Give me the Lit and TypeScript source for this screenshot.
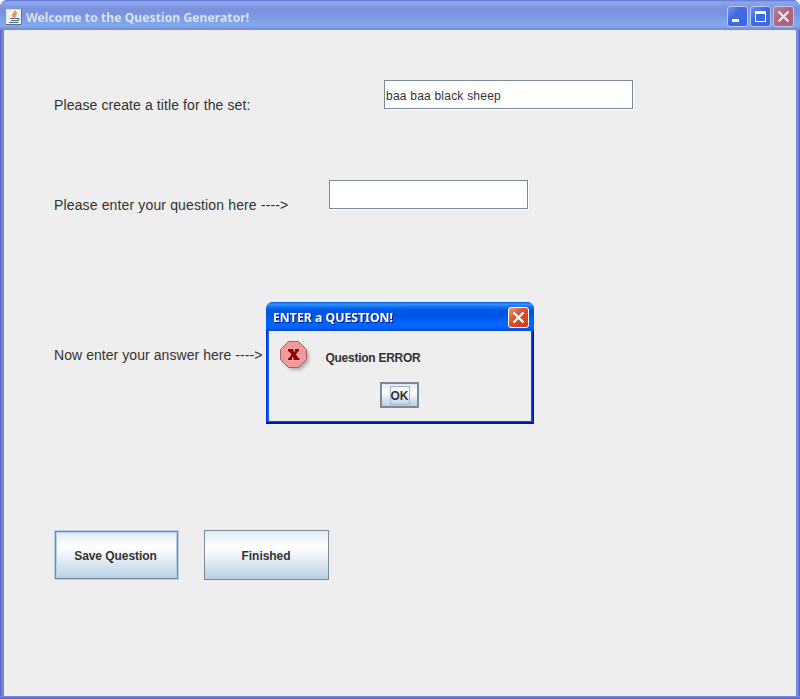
import { LitElement, html, css } from "lit";
import { customElement } from "lit/decorators.js";

@customElement("app-root")
export class AppRoot extends LitElement {
  static styles = css`
    :host {
      display: block;
      position: relative;
      width: 800px;
      height: 699px;
      overflow: hidden;
      font-family: "Liberation Sans", Arial, sans-serif;
      color: #333;
    }
    * { box-sizing: border-box; }
    svg { display: block; flex: none; }
    .window {
      display: flex;
      flex-direction: column;
      height: 699px;
      background: linear-gradient(90deg, #6468cc 0 1px, #6b76da 1px 2px, #7489e0 2px 798px, #6b76da 798px 799px, #6064c4 799px);
      border-radius: 7px 7px 0 0;
      overflow: hidden;
    }
    .bar {
      height: 30px;
      flex: none;
      display: flex;
      align-items: center;
      padding: 3px 6px 0 6px;
      background: linear-gradient(#6273d5 0, #8ba7ec 2px, #88a3e9 4px, #7b93df 8px, #7b94e0 14px, #80a3e9 21px, #82a8ec 26px, #7b96e1 28px, #7189da 30px);
    }
    .title {
      margin-left: 4px;
      flex: 1;
      font: 700 13px "Noto Sans", "Open Sans", sans-serif;
      line-height: 20px;
      color: #d8e4f8;
      white-space: nowrap;
    }
    .title span { display: inline-block; transform-origin: 0 50%; }
    .t1 span { transform: scaleX(.94); }
    .t2 span { transform: scaleX(.98); font-size: 12.5px; }
    .controls { display: flex; gap: 2px; }
    .body {
      flex: 1;
      margin: 0 4px;
      padding: 50px 0 0 50px;
      background: #eee;
      display: flex;
      flex-direction: column;
    }
    .edge { height: 3px; flex: none; background: linear-gradient(#7489df 0 1px, #6b75d8 1px 2px, #6468c6 2px); }
    .row { display: flex; height: 50px; flex: none; }
    .r2 { margin-top: 50px; }
    .r3 { margin-top: 100px; }
    .r4 { margin-top: 150px; gap: 25px; }
    .label { font-size: 14px; line-height: 50px; white-space: nowrap; flex: none; letter-spacing: .06px; }
    .l1 { width: 330px; letter-spacing: .1px; }
    .l2 { width: 275px; letter-spacing: .14px; }
    .field {
      height: 30px;
      padding: 0 1px 1px 0;
      background: #fff;
      border: 0;
      flex: none;
    }
    .f1 { width: 250px; }
    .f2 { width: 200px; }
    .inner { height: 29px; border: 1px solid #7a8a99; font-size: 12px; line-height: 30px; padding-left: 1px; white-space: nowrap; letter-spacing: .22px; }
    .btn {
      width: 125px;
      height: 50px;
      padding: 2px 1px 0 0;
      border: 1px solid #7a8a99;
      background: linear-gradient(#dde8f3 0, #fff 30%, #fff 36%, #b8cfe5 100%);
      font-size: 12px;
      font-weight: 700;
      color: #333;
      display: flex;
      align-items: center;
      justify-content: center;
      white-space: nowrap;
      letter-spacing: -.06px;
    }
    .active { padding-right: 2px; border-color: #b8cfe5; box-shadow: inset 0 0 0 1px #7a8a99, inset 0 0 0 2px #b8cfe5; }
    .dialog {
      position: absolute;
      left: 266px;
      top: 302px;
      width: 268px;
      height: 122px;
      border-radius: 7px 7px 0 0;
      overflow: hidden;
      background: linear-gradient(90deg, #0831d9 0 1px, #0a48e4 1px 2px, #166aee 2px 3px, #0855dd 3px 266px, #0030c8 266px 267px, #00138c 267px);
      display: flex;
      flex-direction: column;
    }
    .dbar {
      height: 29px;
      flex: none;
      display: flex;
      align-items: center;
      padding: 2px 5px 0 7px;
      background: linear-gradient(#0058d5 0, #3a93ff 2px, #1c7cf8 4px, #0058e4 8px, #0054e0 13px, #0062fb 19px, #0066ff 24px, #005ded 27px, #0044c8 29px);
    }
    .dbar .title { margin: 0; color: #fff; text-shadow: 1px 1px 0 #0a1883; }
    .dbody { flex: 1; margin: 0 3px; background: #eee; display: flex; flex-direction: column; padding: 9px 0 0 10px; }
    .message { display: flex; height: 34px; }
    .message p { margin: 0 0 0 12.5px; font-size: 12px; font-weight: 700; line-height: 36px; white-space: nowrap; letter-spacing: -.27px; }
    .ok { width: 39px; height: 26px; padding: 0; margin: 8px 0 0 101px; border: 2px solid #7a8a99; }
    .ok span { border: 1px solid #a3b8cc; height: 19px; width: 20px; line-height: 18px; display: flex; justify-content: center; }
    .dedge { height: 3px; flex: none; background: linear-gradient(#0441d8 0 1px, #0022b0 1px 2px, #00138c 2px); }
  `;

  private control(kind: "min" | "max" | "close" | "alert") {
    const red = kind === "close";
    const hot = kind === "alert";
    const id = `g-${kind}`;
    const stops = hot ? ["#ef9a7c", "#df5431", "#c63a13"] : red ? ["#bd8398", "#b2677d", "#a85f78"] : ["#7595ee", "#4169df", "#3b69e2"];
    return html`<svg width="21" height="21" viewBox="0 0 21 21">
      <defs>
        <linearGradient id=${id} x1="0" y1="0" x2="1" y2="1">
          <stop offset="0" stop-color=${stops[0]} />
          <stop offset=".4" stop-color=${stops[1]} />
          <stop offset="1" stop-color=${stops[2]} />
        </linearGradient>
      </defs>
      <rect x=".5" y=".5" width="20" height="20" rx="2.5" fill="url(#${id})" stroke=${hot ? "#fff" : "#b9c9f3"} />
      <path d="M5 13h7v3H5z" fill="#fff" visibility=${kind === "min" ? "visible" : "hidden"} />
      <path d="M5 5h11v11H5zM6 8v7h9V8z" fill="#fff" fill-rule="evenodd" visibility=${kind === "max" ? "visible" : "hidden"} />
      <path d="M5.500 5.500l10 10M15.500 5.500l-10 10" stroke=${hot ? "#fff" : "#f3e9ef"} stroke-width="2.300" visibility=${red || hot ? "visible" : "hidden"} />
    </svg>`;
  }

  render() {
    return html`
      <div class="window">
        <div class="bar">
          <svg width="16" height="16" viewBox="0 0 16 16">
            <rect x=".5" y=".5" width="15" height="15" fill="#f1f1ee" stroke="#dfe3e8" />
            <path d="M0 15.500h15.500V0" fill="none" stroke="#676d7c" />
            <path d="M9.500 1.500C9.800 4 5 5 7.500 8.500M11 4C7.500 5.500 9.800 6.500 8.500 8.500" fill="none" stroke="#ee8126" stroke-width="1.500" />
            <path d="M4 9.500h7M5 11.500h5.500M3 13.500h9.500M11 9.500c3-.7 2.500 2-.5 2.200" fill="none" stroke="#4d6f8e" stroke-width="1.200" />
          </svg>
          <div class="title t1"><span>Welcome to the Question Generator!</span></div>
          <div class="controls">${this.control("min")}${this.control("max")}${this.control("close")}</div>
        </div>
        <div class="body">
          <div class="row">
            <div class="label l1">Please create a title for the set:</div>
            <div class="field f1"><div class="inner">baa baa black sheep</div></div>
          </div>
          <div class="row r2">
            <div class="label l2">Please enter your question here ----&gt;</div>
            <div class="field f2"><div class="inner"></div></div>
          </div>
          <div class="row r3"><div class="label">Now enter your answer here ----&gt;</div></div>
          <div class="row r4">
            <div class="btn active">Save Question</div>
            <div class="btn">Finished</div>
          </div>
        </div>
        <div class="edge"></div>
      </div>
      <div class="dialog">
        <div class="dbar">
          <div class="title t2"><span>ENTER a QUESTION!</span></div>
          ${this.control("alert")}
        </div>
        <div class="dbody">
          <div class="message">
            <svg width="34" height="34" viewBox="0 0 34 34">
              <defs><filter id="soft" x="-20%" y="-20%" width="140%" height="140%"><feGaussianBlur stdDeviation="1.400" /></filter></defs>
              <path d="M12 5h10l8 8v9l-8 8H12l-8-8v-9z" fill="#888" opacity=".6" filter="url(#soft)" />
              <path d="M9.500 1.500h10l8 8v10l-8 8h-10l-8-8v-10z" fill="#f09a9a" stroke="#a9605f" />
              <path d="M9 9h5.500v2l.8 1 .7-1V9h4v2.500h-1l-2 3 2.500 3.500h1v2h-6v-2l-.8-1-.7 1v2H9v-2h1l2.500-3.500-2.500-3H9z" fill="#900" stroke="#f5b0b0" stroke-width="1.600" paint-order="stroke" />
            </svg>
            <p>Question ERROR</p>
          </div>
          <div class="btn ok"><span>OK</span></div>
        </div>
        <div class="dedge"></div>
      </div>
    `;
  }
}
